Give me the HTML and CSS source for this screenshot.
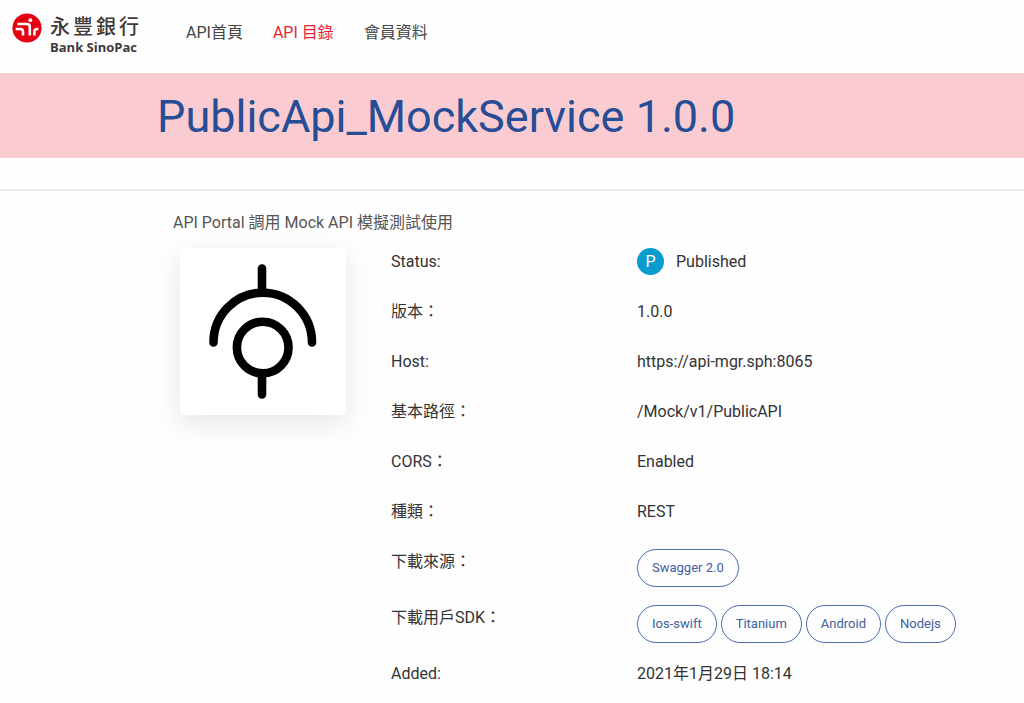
FILE: index.html
```html
<!DOCTYPE html>
<html lang="zh-Hant">
<head>
<meta charset="utf-8">
<meta name="viewport" content="width=device-width, initial-scale=1">
<title>PublicApi_MockService 1.0.0</title>
<link rel="stylesheet" href="styles.css">
</head>
<body>
<header class="topbar">
  <a class="brand" href="#">
    <svg class="brand-mark" viewBox="0 0 30 30" aria-hidden="true">
      <circle cx="15" cy="15" r="14.600" fill="#e60012"/>
      <g fill="none" stroke="#fff" stroke-width="2.600">
        <path d="M5.400 11H15Q17.800 11 17.800 13.800V22.600"/>
        <path d="M3.600 16H8.200Q11 16 11 18.800V22.600"/>
        <path d="M22.400 22.600V18.800Q22.400 16 25.200 16H26.400"/>
      </g>
      <circle cx="18.400" cy="7.200" r="1.900" fill="#fff"/>
    </svg>
    <span class="brand-text">
      <span class="brand-zh"><span>永</span><span>豐</span><span>銀</span><span>行</span></span>
      <span class="brand-en">Bank SinoPac</span>
    </span>
  </a>
  <nav class="menu">
    <a class="menu-link" href="#">API首頁</a>
    <a class="menu-link is-active" href="#" aria-current="page">API 目錄</a>
    <a class="menu-link" href="#">會員資料</a>
  </nav>
</header>
<div class="banner"><h1 class="banner-title">PublicApi_MockService 1.0.0</h1></div>
<div class="divider"></div>
<main class="content">
  <p class="summary">API Portal 調用 Mock API 模擬測試使用</p>
  <div class="detail">
    <div class="api-card">
      <svg class="api-icon" viewBox="0 0 166 167" role="img" aria-label="API">
        <g fill="none" stroke="#000" stroke-width="8.600" stroke-linecap="round">
          <path d="M82 20.500V44"/>
          <path d="M33.500 94.500A49 49.500 0 0 1 132 94.500"/>
          <circle cx="82.700" cy="99.500" r="25.800"/>
          <path d="M82 126V146.500"/>
        </g>
      </svg>
    </div>
    <dl class="facts">
      <div class="fact"><dt>Status:</dt><dd class="status"><span class="badge">P</span>Published</dd></div>
      <div class="fact"><dt>版本：</dt><dd>1.0.0</dd></div>
      <div class="fact"><dt>Host:</dt><dd>https://api-mgr.sph:8065</dd></div>
      <div class="fact"><dt>基本路徑：</dt><dd>/Mock/v1/PublicAPI</dd></div>
      <div class="fact"><dt>CORS：</dt><dd>Enabled</dd></div>
      <div class="fact"><dt>種類：</dt><dd>REST</dd></div>
      <div class="fact is-buttons"><dt>下載來源：</dt><dd class="buttons"><button class="pill" type="button">Swagger 2.0</button></dd></div>
      <div class="fact is-buttons"><dt>下載用戶SDK：</dt><dd class="buttons"><button class="pill" type="button">Ios-swift</button><button class="pill" type="button">Titanium</button><button class="pill" type="button">Android</button><button class="pill" type="button">Nodejs</button></dd></div>
      <div class="fact"><dt>Added:</dt><dd>2021年1月29日 18:14</dd></div>
    </dl>
  </div>
</main>
</body>
</html>
```
FILE: styles.css
```css
* { box-sizing: border-box; }
body {
  margin: 0;
  background: #fefefe;
  color: #333;
  font: 400 16px/24px Roboto, "Noto Sans CJK TC", sans-serif;
}
.topbar {
  display: flex;
  align-items: flex-start;
  gap: 47px;
  padding: 13px 12px 18px;
}
.brand {
  display: flex;
  gap: 8px;
  color: #3e3a39;
  text-decoration: none;
}
.brand-mark { width: 30px; height: 30px; }
.brand-text { display: flex; flex-direction: column; }
.brand-zh {
  display: flex;
  gap: 3px;
  font: 500 20px/26px "Noto Sans CJK TC", sans-serif;
}
.brand-en {
  font: 700 13px/16px "Open Sans", sans-serif;
}
.menu { display: flex; gap: 30px; padding-top: 8px; }
.menu-link { color: #444; text-decoration: none; }
.menu-link.is-active { color: #ea1f35; }
.banner { padding: 16px 157px 14px; background: #facbd0; }
.banner-title {
  margin: 0;
  color: #264d95;
  font-size: 45px;
  font-weight: 400;
  line-height: 55px;
}
.divider { height: 33px; border-bottom: 2px solid #ececec; }
.content { padding: 20px 48px 0 173px; }
.summary { margin: 0; color: #555; }
.detail {
  display: grid;
  grid-template-columns: 166px 1fr;
  gap: 45px;
  align-items: start;
  padding: 13px 0 0 7px;
}
.api-card {
  border-radius: 4px;
  background: #fff;
  box-shadow: 0 8px 28px rgba(0, 0, 0, 0.1);
}
.api-icon { display: block; width: 100%; }
.facts { margin: 0; }
.fact {
  display: grid;
  grid-template-columns: 246px 1fr;
  min-height: 50px;
}
.fact.is-buttons { min-height: 56px; }
.fact dt { padding-top: 2px; }
.fact dd { margin: 0; padding-top: 2px; }
.fact .status {
  display: flex;
  align-items: flex-start;
  gap: 12px;
  padding-top: 0;
  line-height: 27px;
}
.badge {
  width: 27px;
  height: 27px;
  border-radius: 50%;
  background: #0a9bd0;
  color: #fff;
  text-align: center;
}
.fact .buttons {
  display: flex;
  flex-wrap: wrap;
  align-items: flex-start;
  gap: 4px;
  padding-top: 1px;
}
.pill {
  height: 38px;
  padding: 0 14px;
  border: 1px solid #4d6bad;
  border-radius: 19px;
  background: transparent;
  color: #40609f;
  font: 400 13px/20px Roboto, sans-serif;
}
```
